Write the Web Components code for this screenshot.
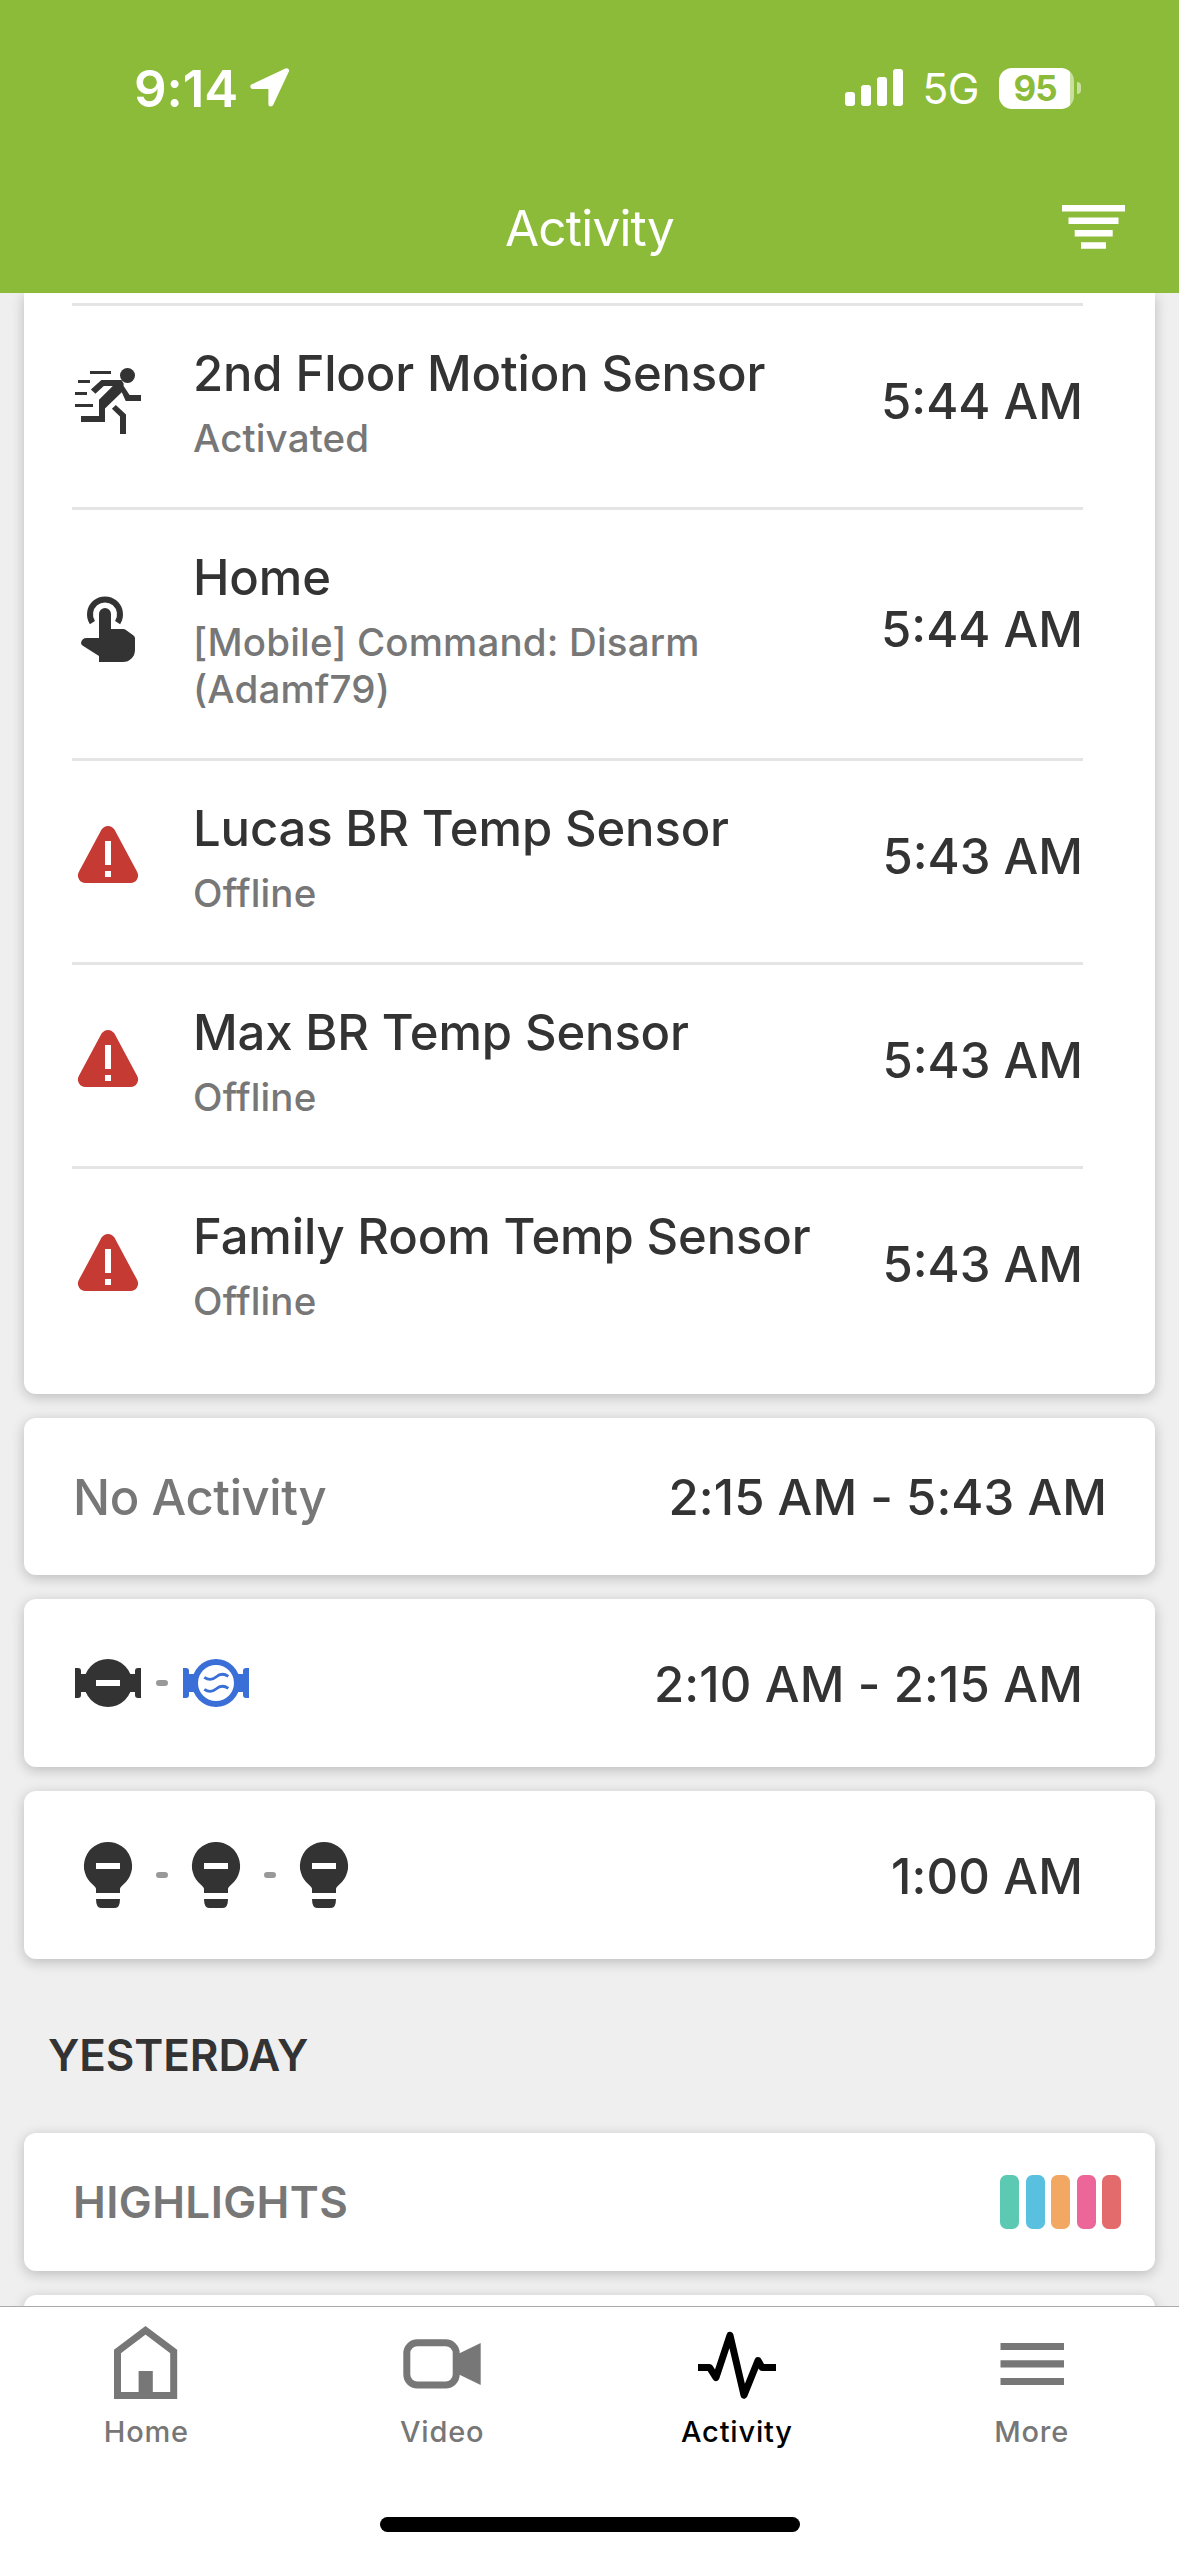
<!DOCTYPE html>
<html lang="en">
<head>
<meta charset="utf-8">
<title>Activity</title>
<style>
    html, body { margin: 0; padding: 0; }
    body {
        width: 1179px;
        height: 2556px;
        overflow: hidden;
        font-family: Inter, "Liberation Sans", sans-serif;
        font-kerning: normal;
    }
</style>
</head>
<body>

<phone-screen>
    <status-bar slot="header" time="9:14" network="5G" battery="95"></status-bar>
    <nav-bar slot="header">Activity</nav-bar>

    <event-card class="continued">
        <event-row icon="motion" time="5:44 AM">2nd Floor Motion Sensor<span slot="detail">Activated</span></event-row>
        <event-row icon="touch" time="5:44 AM">Home<span slot="detail">[Mobile] Command: Disarm (Adamf79)</span></event-row>
        <event-row icon="warning" time="5:43 AM">Lucas BR Temp Sensor<span slot="detail">Offline</span></event-row>
        <event-row icon="warning" time="5:43 AM">Max BR Temp Sensor<span slot="detail">Offline</span></event-row>
        <event-row icon="warning" time="5:43 AM">Family Room Temp Sensor<span slot="detail">Offline</span></event-row>
    </event-card>

    <event-card>
        <summary-row class="idle" time="2:15 AM - 5:43 AM">No Activity</summary-row>
    </event-card>
    <event-card>
        <summary-row icons="valve-closed,valve-open" time="2:10 AM - 2:15 AM"></summary-row>
    </event-card>
    <event-card>
        <summary-row icons="bulb,bulb,bulb" time="1:00 AM"></summary-row>
    </event-card>

    <day-heading>YESTERDAY</day-heading>
    <event-card>
        <highlights-row colors="#5cc9b2,#59c0e0,#f2a862,#ed6699,#e36b6b">HIGHLIGHTS</highlights-row>
    </event-card>
    <event-card>
        <summary-row></summary-row>
    </event-card>

    <tab-bar slot="footer">
        <tab-item icon="home">Home</tab-item>
        <tab-item icon="video">Video</tab-item>
        <tab-item icon="activity" selected>Activity</tab-item>
        <tab-item icon="more">More</tab-item>
    </tab-bar>
</phone-screen>

<script>
// Event icons, all on a 24 unit grid.
const EVENT_ICONS = {
    "motion": `
        <path d="M6 2h7v1H6zM2 5h4v1H2zM1 9h4v1H1zM1 13h6v1H1z"/>
        <circle cx="18.5" cy="3.5" r="2.5"/>
        <path d="M9.8 5H16.5L17.2 6.2V7L19.2 10H23V12H17.9L16.6 9.1L11 14.5V19H3V17H9V11.6L13.6 7H10.6L7.8 9.6L6.3 8.2z"/>
        <path d="M14.6 13.3L18 16.5V23H16V17.2L13.3 14.6z"/>`,
    "touch": `
        <path d="M6.8 9.85A5 5 0 1 1 15.2 9.85" fill="none" stroke="currentColor" stroke-width="2"/>
        <path d="M9 7a2 2 0 0 1 4 0V12H17Q17.6 12 18.1 12.4L20.5 14.2Q21 14.6 21 15.2V19a4 4 0 0 1-4 4H9V21L3.6 17.6Q3 17.2 3 16.6Q3.3 15 4.9 15H9z"/>`,
    "warning": `
        <path fill="#c53a33" d="M9.85 3.2a2.5 2.5 0 0 1 4.3 0L21.65 17.2A2.5 2.5 0 0 1 19.5 21H4.5A2.5 2.5 0 0 1 2.35 17.2z"/>
        <path fill="#fff" d="M11 7h2v8h-2zM11 17h2v2h-2z"/>`,
    "valve-closed": `
        <path d="M1 7h1a1 1 0 0 1 1 1v1h18V8a1 1 0 0 1 1-1h1v10h-1a1 1 0 0 1-1-1v-1H3v1a1 1 0 0 1-1 1H1z"/>
        <circle cx="12" cy="12" r="8"/>
        <path fill="#fff" d="M8 11h8v2H8z"/>`,
    "valve-open": `
        <g fill="#3a6fd8">
            <path d="M1 7h1a1 1 0 0 1 1 1v1h18V8a1 1 0 0 1 1-1h1v10h-1a1 1 0 0 1-1-1v-1H3v1a1 1 0 0 1-1 1H1z"/>
            <circle cx="12" cy="12" r="8"/>
        </g>
        <circle cx="12" cy="12" r="6" fill="#fff"/>
        <path fill="none" stroke="#3a6fd8" stroke-width=".95" d="M8.1 10.1c1.4 1 2.7.9 3.9-.1 1.3-1.1 2.7-1.2 4.1-.2M8.1 14.1c1.4 1 2.7.9 3.9-.1 1.3-1.1 2.7-1.2 4.1-.2"/>`,
    "bulb": `
        <path d="M12 1a8 8 0 0 1 5.2 14.1Q16 16.1 16 16.7V18H8v-1.3q0-.6-1.2-1.6A8 8 0 0 1 12 1z"/>
        <path d="M8 20h8q0 3-1.7 3H9.7Q8 23 8 20z"/>
        <path fill="#fff" d="M8 8h8v2H8z"/>`
};

// Tab icons, drawn 1:1 in an 84x84 box.
const TAB_ICONS = {
    "home": `
        <path fill="none" stroke="currentColor" stroke-width="7" d="M12.5 72.5V28.5L40.5 7.3L68.7 28.5V72.5z"/>
        <path d="M33.6 48h14.2v22H33.6z"/>`,
    "video": `
        <rect x="6.8" y="19.8" width="49.4" height="42.2" rx="10.5" fill="none" stroke="currentColor" stroke-width="7"/>
        <path d="M58 31L80.7 20V62L58 51z"/>`,
    "activity": `
        <path fill="none" stroke="currentColor" stroke-width="7" stroke-linejoin="round" d="M3 44.4H14.5L21 54.5L35 12.3L49 72.3L63 37.5L67 44.4H81"/>`,
    "more": `<path d="M10.5 20h63.5v7H10.5zM10.5 37.3h63.5v7.2H10.5zM10.5 55h63.5v7H10.5z"/>`
};

const svg = (icons, name, size, box) =>
    `<svg width="${size}" height="${size}" viewBox="0 0 ${box} ${box}" fill="currentColor">${icons[name]}</svg>`;

class BaseElement extends HTMLElement {
    constructor() {
        super();
        this.attachShadow({ mode: "open" });
    }

    connectedCallback() {
        this.shadowRoot.innerHTML = this.render();
    }

    attr(name) {
        return this.getAttribute(name) || "";
    }
}

window.customElements.define("phone-screen", class extends BaseElement {
    render() {
        return `
            <style>
                :host {
                    display: flex;
                    flex-direction: column;
                    width: 1179px;
                    height: 2556px;
                    background: #efefef;
                    color: #333;
                }
                header { height: 293px; flex: none; background: #8cbb3a; color: #fff; }
                main {
                    flex: 1;
                    min-height: 0;
                    overflow: hidden;
                    display: flex;
                    flex-direction: column;
                    gap: 24px;
                    padding: 0 24px;
                }
            </style>
            <header><slot name="header"></slot></header>
            <main><slot></slot></main>
            <slot name="footer"></slot>
        `;
    }
});

window.customElements.define("status-bar", class extends BaseElement {
    render() {
        return `
            <style>
                :host {
                    display: flex;
                    align-items: center;
                    height: 176px;
                    box-sizing: border-box;
                    padding: 0 98px 0 134px;
                }
                .time { font-size: 51px; font-weight: 600; letter-spacing: -0.1px; }
                .arrow { margin-left: 12px; }
                .signal { margin-left: auto; }
                .network { margin-left: 19px; font-size: 42.5px; letter-spacing: -0.5px; }
                .battery {
                    margin-left: 20px;
                    width: 75px;
                    height: 41px;
                    border-radius: 13px;
                    background: linear-gradient(to right, #fff 71px, #c9df9f 71px);
                    color: #8cbb3a;
                    font-size: 35px;
                    font-weight: 700;
                    line-height: 41px;
                    text-align: center;
                    letter-spacing: -1px;
                    text-indent: -3px;
                }
                .nub { margin-left: 3px; width: 4px; height: 12px; border-radius: 0 6px 6px 0; background: #c9df9f; }
            </style>
            <span class="time">${this.attr("time")}</span>
            <svg class="arrow" width="40" height="40" viewBox="0 0 40 40">
                <path d="M36.5 2.8L2.9 18.6H20.9V36z" fill="#fff" stroke="#fff" stroke-width="5" stroke-linejoin="round"/>
            </svg>
            <svg class="signal" width="58" height="38" viewBox="0 0 58 38" fill="#fff">
                <rect x="0" y="23" width="10" height="14" rx="3"/>
                <rect x="16" y="16" width="10" height="21" rx="3"/>
                <rect x="32" y="8" width="10" height="29" rx="3"/>
                <rect x="48" y="0" width="10" height="37" rx="3"/>
            </svg>
            <span class="network">${this.attr("network")}</span>
            <span class="battery">${this.attr("battery")}</span>
            <span class="nub"></span>
        `;
    }
});

window.customElements.define("nav-bar", class extends BaseElement {
    render() {
        return `
            <style>
                :host {
                    display: grid;
                    grid-template-columns: 1fr auto 1fr;
                    align-items: center;
                    height: 117px;
                    box-sizing: border-box;
                    padding: 0 54px 13px;
                    font-size: 49.5px;
                    letter-spacing: -0.8px;
                }
                svg { grid-column: 3; justify-self: end; }
                .title { grid-column: 2; }
            </style>
            <span class="title"><slot></slot></span>
            <svg width="63" height="46" viewBox="0 0 63 46" fill="#fff">
                <path d="M0 0h63v6.5H0zM6.5 12.5h50v6.5h-50zM12.7 25h38v6.5h-38zM19 37.3h25v6.5H19z"/>
            </svg>
        `;
    }
});

window.customElements.define("event-card", class extends BaseElement {
    render() {
        return `
            <style>
                :host {
                    display: block;
                    flex: none;
                    background: #fff;
                    border-radius: 12px;
                    box-shadow: 0 3px 13px rgba(0, 0, 0, .22);
                }
                /* its first rows are scrolled under the header */
                :host(.continued) { border-radius: 0 0 12px 12px; padding: 10px 0 24px; }
            </style>
            <slot></slot>
        `;
    }
});

/*
Attributes:
  - icon: a key of EVENT_ICONS
  - time: the time at the right
 */
window.customElements.define("event-row", class extends BaseElement {
    render() {
        return `
            <style>
                :host {
                    display: grid;
                    grid-template-columns: 72px 1fr auto;
                    column-gap: 49px;
                    align-items: center;
                    margin: 0 72px 0 48px;
                    padding: 34px 0 45px;
                    border-top: 3px solid #e4e4e4;
                    font-weight: 500;
                }
                svg { display: block; }
                .title { font-size: 49px; line-height: 68px; margin-bottom: 7px; white-space: nowrap; letter-spacing: -0.15px; }
                .detail { font-size: 38.5px; line-height: 47px; color: #777; letter-spacing: 0.15px; }
                .time { padding-top: 1px; font-size: 49px; white-space: nowrap; }
            </style>
            ${svg(EVENT_ICONS, this.attr("icon"), 72, 24)}
            <div>
                <div class="title"><slot></slot></div>
                <div class="detail"><slot name="detail"></slot></div>
            </div>
            <span class="time">${this.attr("time")}</span>
        `;
    }
});

/*
Attributes:
  - icons: a comma-separated list of EVENT_ICONS keys, joined by dashes
  - time: the time range at the right
 */
window.customElements.define("summary-row", class extends BaseElement {
    render() {
        const icons = this.attr("icons").split(",").filter(name => name)
            .map(name => svg(EVENT_ICONS, name, 72, 24))
            .join(`<i></i>`);
        return `
            <style>
                :host {
                    display: flex;
                    align-items: center;
                    height: 168px;
                    padding: 0 72px 0 48px;
                    font-size: 49px;
                    font-weight: 500;
                }
                :host(.idle) { height: 157px; padding: 0 48px 0 49px; }
                .label { padding-top: 1px; color: #777; letter-spacing: -0.4px; }
                .icons { display: flex; align-items: center; gap: 12px; }
                i { width: 12px; height: 6px; border-radius: 3px; background: #999; }
                .time { margin-left: auto; padding-top: 2px; letter-spacing: 0.15px; }
                :host(.idle) .time { padding-top: 1px; letter-spacing: 0.05px; }
            </style>
            <span class="label"><slot></slot></span>
            <div class="icons">${icons}</div>
            <span class="time">${this.attr("time")}</span>
        `;
    }
});

window.customElements.define("day-heading", class extends BaseElement {
    render() {
        return `
            <style>
                :host {
                    display: flex;
                    align-items: center;
                    flex: none;
                    height: 126px;
                    box-sizing: border-box;
                    padding: 18px 24px 0;
                    font-size: 44px;
                    font-weight: 600;
                    letter-spacing: -0.1px;
                }
            </style>
            <slot></slot>
        `;
    }
});

window.customElements.define("highlights-row", class extends BaseElement {
    render() {
        const bars = this.attr("colors").split(",")
            .map(color => `<i style="background: ${color}"></i>`)
            .join("");
        return `
            <style>
                :host {
                    display: flex;
                    align-items: center;
                    justify-content: space-between;
                    height: 138px;
                    padding: 0 34px 0 49px;
                    font-size: 44px;
                    font-weight: 600;
                    color: #777;
                    letter-spacing: 0.4px;
                }
                .bars { display: flex; gap: 6.7px; }
                i { width: 18.8px; height: 54px; border-radius: 6.5px; }
            </style>
            <slot></slot>
            <div class="bars">${bars}</div>
        `;
    }
});

window.customElements.define("tab-bar", class extends BaseElement {
    render() {
        return `
            <style>
                :host {
                    display: flex;
                    flex-direction: column;
                    justify-content: space-between;
                    align-items: center;
                    flex: none;
                    height: 250px;
                    box-sizing: border-box;
                    padding-bottom: 24px;
                    border-top: 1px solid #a9a9a9;
                    background: #fff;
                }
                nav { display: grid; grid-template-columns: repeat(4, 1fr); width: 100%; }
                .indicator { width: 420px; height: 15px; border-radius: 8px; background: #000; }
            </style>
            <nav><slot></slot></nav>
            <div class="indicator"></div>
        `;
    }
});

window.customElements.define("tab-item", class extends BaseElement {
    render() {
        return `
            <style>
                :host {
                    display: flex;
                    flex-direction: column;
                    align-items: center;
                    padding-top: 16px;
                    color: #777;
                    font-size: 29px;
                    font-weight: 500;
                    line-height: 36px;
                    letter-spacing: 0.8px;
                }
                :host([selected]) { color: #000; }
                :host([icon="home"]) span { margin-right: 2px; }
                svg { display: block; margin-bottom: 7px; }
            </style>
            ${svg(TAB_ICONS, this.attr("icon"), 84, 84)}
            <span><slot></slot></span>
        `;
    }
});
</script>
</body>
</html>
